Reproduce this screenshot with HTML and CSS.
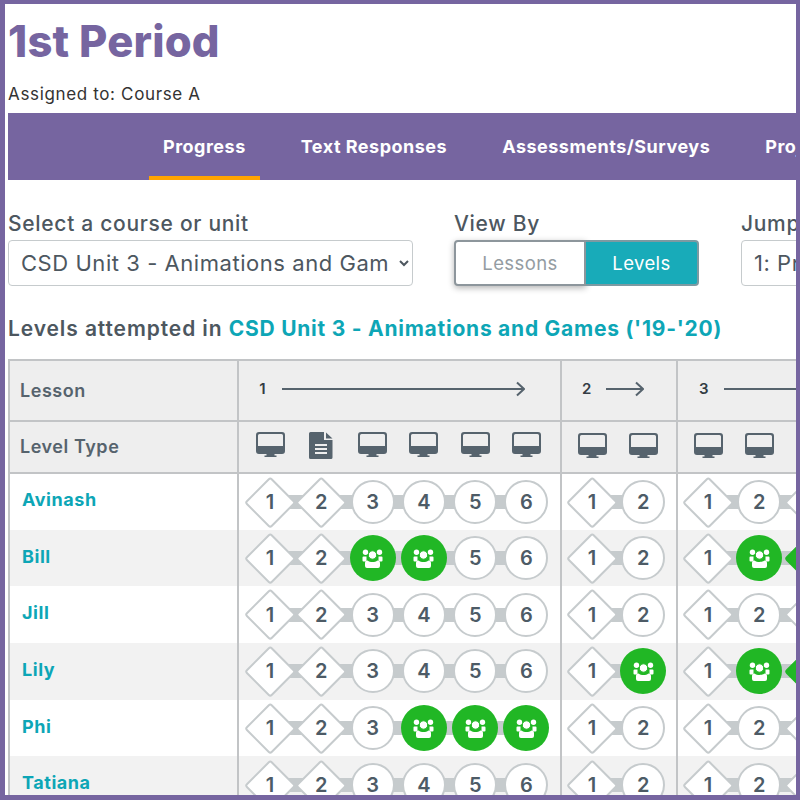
FILE: index.html
```html
<!DOCTYPE html>
<html lang="en">
<head>
<meta charset="utf-8">
<title>1st Period</title>
<link rel="stylesheet" href="styles.css">
</head>
<body>
<svg class="defs" width="0" height="0" aria-hidden="true">
  <symbol id="monitor" viewBox="0 0 29 25">
    <path fill="#56636d" fill-rule="evenodd" d="M3 0h23a3 3 0 0 1 3 3v16a3 3 0 0 1-3 3H3a3 3 0 0 1-3-3V3a3 3 0 0 1 3-3zm.5 2A1.500 1.500 0 0 0 2 3.500V14h25V3.500A1.500 1.500 0 0 0 25.500 2z"/>
    <path fill="#56636d" d="M10.500 22h8v1.500h2V25h-12v-1.500h2z"/>
  </symbol>
  <symbol id="doc" viewBox="0 0 24 27">
    <path fill="#56636d" d="M1.500 0H15v8h8.500v17.500a1.500 1.500 0 0 1-1.500 1.500H1.500A1.500 1.500 0 0 1 0 25.500v-24A1.500 1.500 0 0 1 1.500 0zM17 .5l6.500 6H17z"/>
    <path fill="#eee" d="M6 12h12v2H6zM6 16h12v2H6zM6 20h12v2H6z"/>
  </symbol>
  <symbol id="group" viewBox="0 0 21 19">
    <circle fill="#fff" cx="3.500" cy="3.200" r="2.700"/>
    <circle fill="#fff" cx="17.500" cy="3.200" r="2.700"/>
    <path fill="#fff" d="M1.500 7.500h3v5h-3a1 1 0 0 1-1-1v-3a1 1 0 0 1 1-1zM16.500 7.500h3a1 1 0 0 1 1 1v3a1 1 0 0 1-1 1h-3z"/>
    <circle fill="#fff" stroke="#21b725" cx="10.500" cy="6" r="4.200"/>
    <path fill="#fff" d="M5.500 11.500c1.500 1 3 1.500 5 1.500s3.500-.5 5-1.500c1.500 0 2.500 1 2.500 2.500v3a2 2 0 0 1-2 2H5a2 2 0 0 1-2-2v-3c0-1.500 1-2.500 2.500-2.500z"/>
  </symbol>
</svg>
<div class="frame">
  <h1 class="title">1st Period</h1>
  <p class="assigned">Assigned to: Course A</p>

  <nav class="tabs">
    <a class="tab tab-active">Progress</a>
    <a class="tab">Text Responses</a>
    <a class="tab">Assessments/Surveys</a>
    <a class="tab">Projects</a>
  </nav>

  <div class="filters">
    <div class="filter filter-course">
      <label class="filter-label">Select a course or unit</label>
      <select class="select select-course"><option>CSD Unit 3 - Animations and Games ('19-'20)</option></select>
    </div>
    <div class="filter filter-view">
      <span class="filter-label">View By</span>
      <div class="toggle">
        <button class="toggle-btn toggle-off">Lessons</button>
        <button class="toggle-btn toggle-on">Levels</button>
      </div>
    </div>
    <div class="filter filter-jump">
      <label class="filter-label">Jump to Lesson</label>
      <select class="select select-jump"><option>1: Programming Images</option></select>
    </div>
  </div>

  <p class="attempted">Levels attempted in <a class="attempted-link">CSD Unit 3 - Animations and Games ('19-'20)</a></p>

  <table class="grid">
    <colgroup><col class="col-name"><col class="col-l1"><col class="col-l2"><col class="col-l3"></colgroup>
    <thead>
      <tr class="row-lesson">
        <th class="head-label">Lesson</th>
        <th><div class="lesson lesson-1"><span class="lesson-num">1</span><svg width="243" height="16" viewBox="0 0 243 16"><path d="M0 8h242M235 1.500l7 6.500-7 6.500" fill="none" stroke="#56636d" stroke-width="2"/></svg></div></th>
        <th><div class="lesson lesson-2"><span class="lesson-num">2</span><svg width="38" height="16" viewBox="0 0 38 16"><path d="M0 8h37M30 1.500l7 6.500-7 6.500" fill="none" stroke="#56636d" stroke-width="2"/></svg></div></th>
        <th><div class="lesson lesson-3"><span class="lesson-num">3</span><svg width="243" height="16" viewBox="0 0 243 16"><path d="M0 8h242M235 1.500l7 6.500-7 6.500" fill="none" stroke="#56636d" stroke-width="2"/></svg></div></th>
      </tr>
      <tr class="row-type">
        <th class="head-label">Level Type</th>
        <th><div class="types">
          <span class="type"><svg class="i-mon"><use href="#monitor"/></svg></span>
          <span class="type"><svg class="i-doc"><use href="#doc"/></svg></span>
          <span class="type"><svg class="i-mon"><use href="#monitor"/></svg></span>
          <span class="type"><svg class="i-mon"><use href="#monitor"/></svg></span>
          <span class="type"><svg class="i-mon"><use href="#monitor"/></svg></span>
          <span class="type"><svg class="i-mon"><use href="#monitor"/></svg></span>
        </div></th>
        <th><div class="types">
          <span class="type"><svg class="i-mon"><use href="#monitor"/></svg></span>
          <span class="type"><svg class="i-mon"><use href="#monitor"/></svg></span>
        </div></th>
        <th><div class="types">
          <span class="type"><svg class="i-mon"><use href="#monitor"/></svg></span>
          <span class="type"><svg class="i-mon"><use href="#monitor"/></svg></span>
          <span class="type"><svg class="i-mon"><use href="#monitor"/></svg></span>
        </div></th>
      </tr>
    </thead>
    <tbody>
      <tr>
        <td class="name">Avinash</td>
        <td><div class="bubbles"><span class="b d"><i>1</i></span><span class="b d"><i>2</i></span><span class="b c"><i>3</i></span><span class="b c"><i>4</i></span><span class="b c"><i>5</i></span><span class="b c"><i>6</i></span></div></td>
        <td><div class="bubbles"><span class="b d"><i>1</i></span><span class="b c"><i>2</i></span></div></td>
        <td><div class="bubbles"><span class="b d"><i>1</i></span><span class="b c"><i>2</i></span><span class="b d"><i>3</i></span></div></td>
      </tr>
      <tr>
        <td class="name">Bill</td>
        <td><div class="bubbles"><span class="b d"><i>1</i></span><span class="b d"><i>2</i></span><span class="b g"><svg class="i-grp"><use href="#group"/></svg></span><span class="b g"><svg class="i-grp"><use href="#group"/></svg></span><span class="b c"><i>5</i></span><span class="b c"><i>6</i></span></div></td>
        <td><div class="bubbles"><span class="b d"><i>1</i></span><span class="b c"><i>2</i></span></div></td>
        <td><div class="bubbles"><span class="b d"><i>1</i></span><span class="b g"><svg class="i-grp"><use href="#group"/></svg></span><span class="b d dg"><i>3</i></span></div></td>
      </tr>
      <tr>
        <td class="name">Jill</td>
        <td><div class="bubbles"><span class="b d"><i>1</i></span><span class="b d"><i>2</i></span><span class="b c"><i>3</i></span><span class="b c"><i>4</i></span><span class="b c"><i>5</i></span><span class="b c"><i>6</i></span></div></td>
        <td><div class="bubbles"><span class="b d"><i>1</i></span><span class="b c"><i>2</i></span></div></td>
        <td><div class="bubbles"><span class="b d"><i>1</i></span><span class="b c"><i>2</i></span><span class="b d"><i>3</i></span></div></td>
      </tr>
      <tr>
        <td class="name">Lily</td>
        <td><div class="bubbles"><span class="b d"><i>1</i></span><span class="b d"><i>2</i></span><span class="b c"><i>3</i></span><span class="b c"><i>4</i></span><span class="b c"><i>5</i></span><span class="b c"><i>6</i></span></div></td>
        <td><div class="bubbles"><span class="b d"><i>1</i></span><span class="b g"><svg class="i-grp"><use href="#group"/></svg></span></div></td>
        <td><div class="bubbles"><span class="b d"><i>1</i></span><span class="b g"><svg class="i-grp"><use href="#group"/></svg></span><span class="b d dg"><i>3</i></span></div></td>
      </tr>
      <tr>
        <td class="name">Phi</td>
        <td><div class="bubbles"><span class="b d"><i>1</i></span><span class="b d"><i>2</i></span><span class="b c"><i>3</i></span><span class="b g"><svg class="i-grp"><use href="#group"/></svg></span><span class="b g"><svg class="i-grp"><use href="#group"/></svg></span><span class="b g"><svg class="i-grp"><use href="#group"/></svg></span></div></td>
        <td><div class="bubbles"><span class="b d"><i>1</i></span><span class="b c"><i>2</i></span></div></td>
        <td><div class="bubbles"><span class="b d"><i>1</i></span><span class="b c"><i>2</i></span><span class="b d"><i>3</i></span></div></td>
      </tr>
      <tr>
        <td class="name">Tatiana</td>
        <td><div class="bubbles"><span class="b d"><i>1</i></span><span class="b d"><i>2</i></span><span class="b c"><i>3</i></span><span class="b c"><i>4</i></span><span class="b c"><i>5</i></span><span class="b c"><i>6</i></span></div></td>
        <td><div class="bubbles"><span class="b d"><i>1</i></span><span class="b c"><i>2</i></span></div></td>
        <td><div class="bubbles"><span class="b d"><i>1</i></span><span class="b c"><i>2</i></span><span class="b d"><i>3</i></span></div></td>
      </tr>
    </tbody>
  </table>
</div>
</body>
</html>
```
FILE: styles.css
```css
* { box-sizing: border-box; }
html, body { margin: 0; padding: 0; background: #fff; }
body { font-family: "Inter", "Liberation Sans", sans-serif; color: #4d575f; }
.defs { display: block; height: 0; }

.frame {
  width: 800px;
  height: 800px;
  overflow: hidden;
  border-style: solid;
  border-color: #7665a0;
  border-width: 4px 4px 5px 5px;
  padding: 17px 0 0 3px;
}

.title {
  margin: 0;
  font-size: 43.500px;
  line-height: 40px;
  font-weight: 800;
  letter-spacing: .2px;
  color: #7665a0;
  white-space: nowrap;
}
.assigned {
  margin: 23px 0 9px;
  font-size: 17px;
  line-height: 20px;
  letter-spacing: .65px;
  color: #333;
}

.tabs {
  display: flex;
  height: 67px;
  width: 900px;
  padding-left: 141px;
  gap: 27px;
  background: #7665a0;
}
.tab {
  display: block;
  height: 67px;
  padding: 0 14px;
  line-height: 67px;
  font-size: 18px;
  font-weight: 700;
  letter-spacing: .5px;
  color: #fff;
  white-space: nowrap;
}
.tab-active { border-bottom: 4px solid #ffa400; }

.filters { display: flex; margin-top: 32px; width: 1000px; }
.filter { display: flex; flex-direction: column; gap: 4px; }
.filter-course { width: 446px; }
.filter-view { width: 287px; }
.filter-label {
  font-size: 21px;
  line-height: 24px;
  font-weight: 500;
  letter-spacing: .7px;
  color: #4d575f;
}
.select {
  height: 46px;
  border: 1px solid #c6cbcd;
  border-radius: 4px;
  background: #fff;
  padding: 0 8px;
  font-family: inherit;
  font-size: 22px;
  letter-spacing: .55px;
  color: #4d575f;
}
.select-course { width: 405px; }
.select-jump { width: 250px; }

.toggle { display: flex; height: 46px; width: 245px; }
.toggle-btn {
  height: 46px;
  margin: 0;
  padding: 0;
  border: 2px solid #8d969c;
  font-family: inherit;
  font-size: 18.500px;
  letter-spacing: .4px;
}
.toggle-off {
  width: 132px;
  border-radius: 4px 0 0 4px;
  background: #fff;
  color: #949ca2;
  box-shadow: 0 2px 6px rgba(0, 0, 0, .3);
}
.toggle-on {
  width: 113px;
  border-left: 0;
  border-color: #7c9aa2;
  border-radius: 0 4px 4px 0;
  background: #18abb9;
  color: #fff;
}

.attempted {
  margin: 31px 0 18px;
  font-size: 21px;
  line-height: 24px;
  font-weight: 600;
  letter-spacing: .9px;
  color: #4d575f;
  white-space: nowrap;
}
.attempted-link { color: #0da6b6; font-weight: 700; letter-spacing: .75px; }

.grid {
  table-layout: fixed;
  width: 871px;
  border-collapse: collapse;
}
.col-name { width: 229px; }
.col-l1 { width: 323px; }
.col-l2 { width: 116px; }
.col-l3 { width: 203px; }

.grid th, .grid td {
  padding: 0;
  border: 2px solid #c2c4c6;
  text-align: left;
  font-weight: 400;
}
.grid thead th { background: #eee; }
.grid tbody td { border-top: 0; border-bottom: 0; }
.row-lesson { height: 61px; }
.row-type { height: 52px; }
.grid tbody tr { height: 56.700px; }
.grid tbody tr:nth-child(even) td { background: #f2f2f2; }

.grid .head-label {
  padding: 0 0 1px 10px;
  font-size: 18px;
  font-weight: 600;
  letter-spacing: .55px;
  color: #56636d;
}
.grid .name {
  padding: 0 0 4px 12px;
  font-size: 18px;
  font-weight: 700;
  letter-spacing: .55px;
  color: #0da6b6;
}

.lesson {
  display: flex;
  align-items: center;
  height: 57px;
  margin-top: -4px;
  font-size: 15px;
  font-weight: 600;
  color: #333c44;
}
.lesson-num { width: 9px; text-align: center; }
.lesson-1 { padding-left: 19px; gap: 15px; }
.lesson-2 { padding-left: 20px; gap: 15px; }
.lesson-3 { padding-left: 21px; gap: 16px; }
.lesson svg { flex: none; }

.types { display: flex; gap: 7.300px; padding: 0 0 4px 9px; }
.type { display: flex; justify-content: center; width: 44px; }
.i-mon { width: 29px; height: 25px; }
.i-doc { width: 24px; height: 27px; }
.grid th:nth-child(n+3) .types { padding-left: 8px; }

.bubbles {
  display: flex;
  width: max-content;
  gap: 7.300px;
  margin-left: 9px;
  background: linear-gradient(#c6cbcd, #c6cbcd) center / calc(100% - 40px) 14px no-repeat;
}
.grid td:nth-child(n+3) .bubbles { margin-left: 8px; }
.b {
  position: relative;
  display: grid;
  place-items: center;
  flex: none;
  width: 44px;
  height: 44px;
}
.b i {
  position: relative;
  font-style: normal;
  font-size: 20px;
  font-weight: 600;
  color: #4d5b66;
}
.c {
  border: 2px solid #c6cbcd;
  border-radius: 50%;
  background: #fff;
}
.d::before {
  content: "";
  grid-area: 1 / 1;
  width: 32.500px;
  height: 32.500px;
  border: 2px solid #c6cbcd;
  border-radius: 3px;
  background: #fff;
  transform: rotate(45deg);
}
.d i { grid-area: 1 / 1; }
.dg::before { background: #21b725; border-color: #21b725; }
.g {
  width: 46px;
  height: 46px;
  margin: -1px;
  border-radius: 50%;
  background: #21b725;
}
.i-grp { width: 21px; height: 19px; }
```
